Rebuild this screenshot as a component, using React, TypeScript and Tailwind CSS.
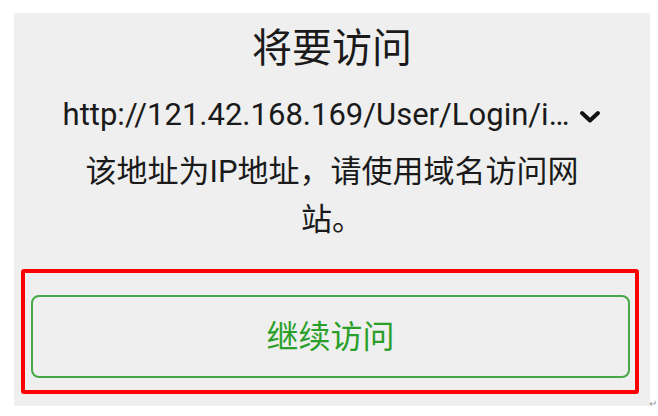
import React from 'react';

const font = { fontFamily: 'Roboto, "Noto Sans CJK SC", sans-serif' };

const Chevron: React.FC = () => (
  <svg width="22" height="14" viewBox="0 0 22 14" className="ml-[10px] mt-[3px]">
    <polyline points="3,3 11,10.5 19,3" fill="none" stroke="#111" strokeWidth="4" strokeLinecap="round" strokeLinejoin="round" />
  </svg>
);

const App: React.FC = () => {
  return (
    <div className="w-[658px] h-[416px] bg-white relative overflow-hidden" style={font}>
      <div className="ml-[14px] mt-[13px] w-[636px] h-[393px] bg-[#efefef] flex flex-col items-center text-[#1a1a1a]">
        <h1 className="mt-[12px] text-[40px] leading-[48px] font-normal">将要访问</h1>
        <div className="mt-[22px] h-[40px] flex items-center text-[31px] leading-[40px]">
          <span>http://121.42.168.169/User/Login/i…</span>
          <Chevron />
        </div>
        <p className="mt-[13px] w-[500px] text-center text-[31px] leading-[48px]">
          该地址为IP地址，请使用域名访问网站。
        </p>
        <div className="mt-[25px] ml-[7px] self-start w-[618px] border-4 border-[#ff0000] rounded-[3px] pt-[22px] pb-[12px] pl-[6px] pr-[5px]">
          <button className="w-full h-[83px] border-2 border-[#46a846] rounded-[8px] text-[32px] text-[#2a9f2a] flex items-center justify-center">
            继续访问
          </button>
        </div>
      </div>
      <span className="absolute left-[649px] top-[396px] text-[10px] text-[#999]">↵</span>
    </div>
  );
};

export default App;
